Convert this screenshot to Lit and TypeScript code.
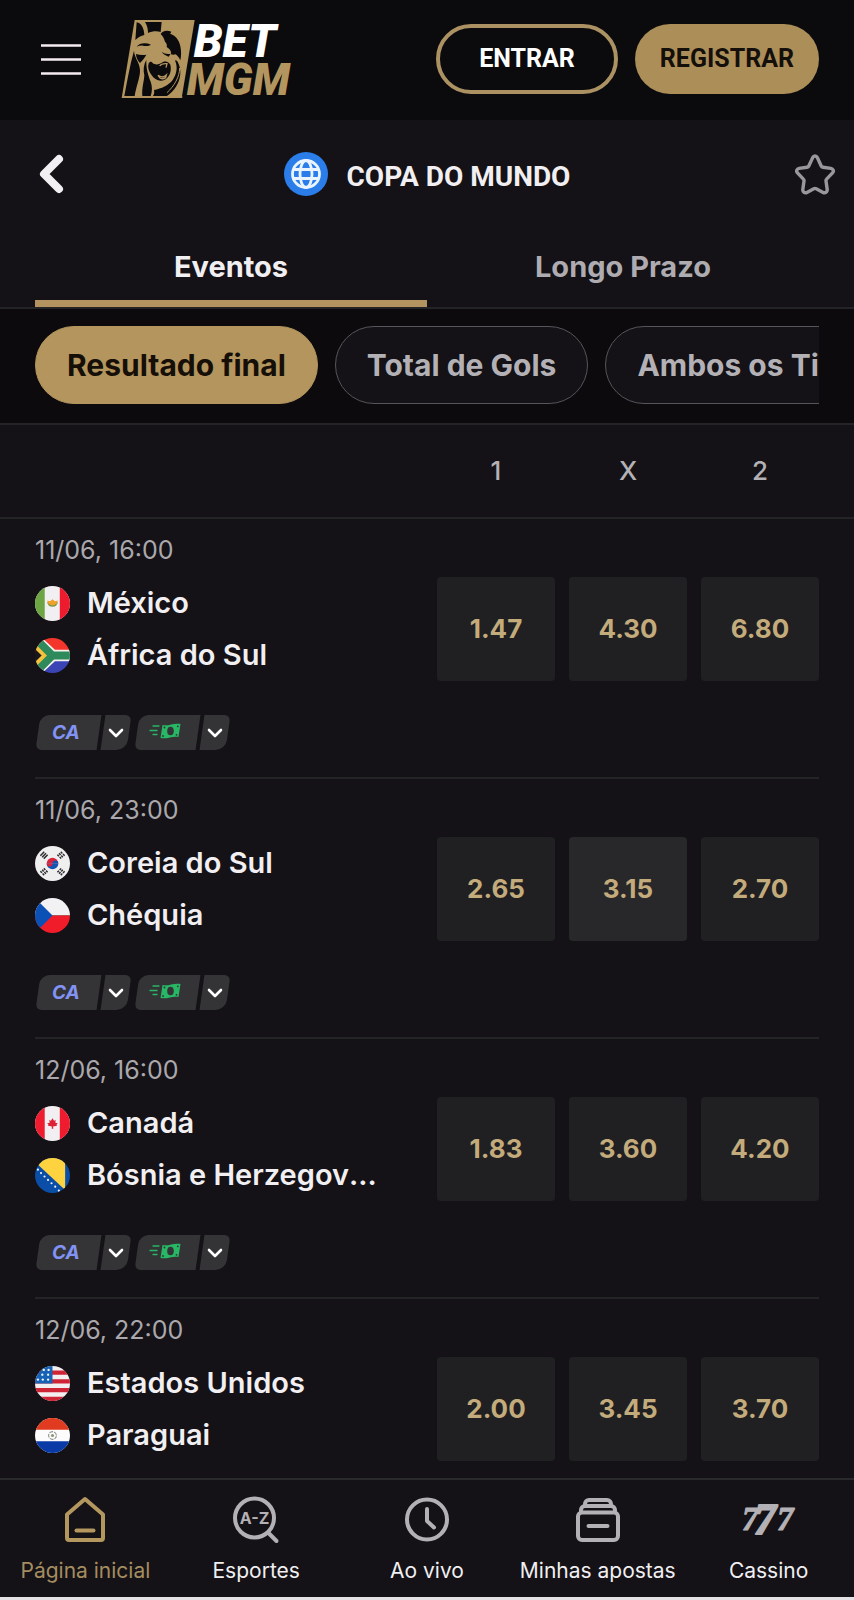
import { LitElement, html, css, svg } from "lit";
import { customElement, property, state } from "lit/decorators.js";
import { classMap } from "lit/directives/class-map.js";

interface Team {
  flag: string;
  name: string;
}
interface Match {
  time: string;
  teams: Team[];
  odds: string[];
}

const MATCHES: Match[] = [
  { time: "11/06, 16:00", teams: [{ flag: "mx", name: "México" }, { flag: "za", name: "África do Sul" }], odds: ["1.47", "4.30", "6.80"] },
  { time: "11/06, 23:00", teams: [{ flag: "kr", name: "Coreia do Sul" }, { flag: "cz", name: "Chéquia" }], odds: ["2.65", "3.15", "2.70"] },
  { time: "12/06, 16:00", teams: [{ flag: "ca", name: "Canadá" }, { flag: "ba", name: "Bósnia e Herzegovina" }], odds: ["1.83", "3.60", "4.20"] },
  { time: "12/06, 22:00", teams: [{ flag: "us", name: "Estados Unidos" }, { flag: "py", name: "Paraguai" }], odds: ["2.00", "3.45", "3.70"] },
];

const FLAGS: Record<string, unknown> = {
  mx: svg`<path fill="#f1eff1" d="M0 0h36v36H0z"/><path fill="#6da544" d="M0 0h10v36H0z"/><path fill="#ec1c2e" d="M25.500 0H36v36H25.500z"/>
    <path d="M13.500 16.500a4.600 5 0 0 0 9 0" fill="none" stroke="#7c9a3c" stroke-width="2"/>
    <path d="M12.500 15l3 .8 2.500-2.300 2.500 2.300 3-.8-1.500 3.500-4 1.500-4-1.500z" fill="#f0a12c"/>`,
  za: svg`<path fill="#f3352c" d="M0 0h36v18H0z"/><path fill="#3b44b4" d="M0 18h36v18H0z"/>
    <path d="M2 3l16 15h18M2 33l16-15" fill="none" stroke="#f5f2ee" stroke-width="12"/>
    <path d="M0 3l14 15L0 33z" fill="#17161a"/><path d="M-2 5l13 13L-2 31" fill="none" stroke="#f4c23c" stroke-width="6"/>
    <path d="M0 0l18 18h18M0 36l18-18" fill="none" stroke="#2f8a5b" stroke-width="8"/>
    <path d="M0 13l6 5-6 5z" fill="#17161a"/>`,
  kr: svg`<path fill="#f0eff0" d="M0 0h36v36H0z"/><path d="M12 18a6 6 0 0 1 12 0z" fill="#d8233b"/><path d="M12 18a6 6 0 0 0 12 0z" fill="#1455b3"/>
    <path d="M12 18a3 3 0 0 0 6 0z" fill="#d8233b"/><path d="M18 18a3 3 0 0 1 6 0z" fill="#1455b3"/>
    <g stroke="#2c2b2e" stroke-width="1.500"><path d="M5.500 10l4-4M7.300 11.500l4-4M9 13l4-4"/><path d="M23 9l4 4M24.700 7.500l4 4M26.500 6l4 4" stroke-dasharray="2.300 1"/>
    <path d="M5.500 26l4 4M7.300 24.500l4 4M9 23l4 4" stroke-dasharray="2.300 1"/><path d="M23 27l4-4M24.700 28.500l4-4M26.500 30l4-4" stroke-dasharray="2.300 1"/></g>`,
  cz: svg`<path fill="#f2f1f3" d="M0 0h36v18H0z"/><path fill="#f01c2a" d="M0 18h36v18H0z"/><path fill="#0b50b5" d="M0 0l18 18L0 36z"/>`,
  ca: svg`<path fill="#f1eff1" d="M0 0h36v36H0z"/><path fill="#ee1c2e" d="M0 0h10v36H0zM25.500 0H36v36H25.500z"/>
    <path fill="#dd2236" d="M18 12.500l1.600 2.600 1.700-.6-.4 2.700 2.600.6-1.300 1.200.4 1.300-4 .7.200 2.500h-1.600l.2-2.500-4-.7.400-1.300-1.300-1.200 2.600-.6-.4-2.700 1.700.6z"/>`,
  ba: svg`<path fill="#0b4ea8" d="M0 0h36v36H0z"/><path fill="#ffd23f" d="M2 6L6-2h25v35z"/>
    <g fill="#f3f5fa"><circle cx="3" cy="12" r="1.100"/><circle cx="6.200" cy="15.500" r="1.100"/><circle cx="9.800" cy="19" r="1.100"/><circle cx="13.400" cy="22.500" r="1.100"/><circle cx="17" cy="26" r="1.100"/><circle cx="20.800" cy="29.500" r="1.100"/><circle cx="24.500" cy="33.500" r="1.100"/></g>`,
  us: svg`<path fill="#f3eff1" d="M0 0h36v36H0z"/><path fill="#cf2336" d="M0 4.500h36v4.500H0zM0 13.500h36V18H0zM0 22.500h36V27H0zM0 31.500h36V36H0z"/>
    <path fill="#1762b5" d="M0 0h18v18H0z"/><g fill="#eef3fb"><circle cx="9" cy="4" r="1.200"/><circle cx="14" cy="4" r="1.200"/><circle cx="7.500" cy="9" r="1.200"/><circle cx="13.500" cy="9" r="1.200"/><circle cx="3" cy="14" r="1.200"/><circle cx="8" cy="14" r="1.200"/><circle cx="13.500" cy="14" r="1.200"/></g>`,
  py: svg`<path fill="#fdfcfd" d="M0 0h36v36H0z"/><path fill="#e03b20" d="M0 0h36v12H0z"/><path fill="#0a3aa6" d="M0 24h36v12H0z"/>
    <circle cx="18" cy="18" r="4" fill="none" stroke="#8c918c" stroke-width="1.100" stroke-dasharray="4 1"/><circle cx="18" cy="18" r="1.600" fill="#8a9a72"/>`,
};

@customElement("team-flag")
export class TeamFlag extends LitElement {
  @property() code = "";
  static styles = css`
    :host { display: block; flex: none; width: 35px; height: 35px; border-radius: 50%; overflow: hidden; }
    .flag { display: block; width: 100%; height: 100%; }
  `;
  render() {
    return html`<svg class="flag" viewBox="0 0 36 36" aria-hidden="true">${FLAGS[this.code]}</svg>`;
  }
}

@customElement("market-badge")
export class MarketBadge extends LitElement {
  @property() kind: "ca" | "cash" = "ca";
  static styles = css`
    :host { display: flex; gap: 4px; }
    .part { position: relative; isolation: isolate; display: flex; align-items: center; height: 35px; margin: 0; padding: 0; border: 0; background: none; font: inherit; cursor: pointer; }
    .part::before { content: ""; position: absolute; inset: 0; z-index: -1; background: #343336; transform: skewX(-8deg); }
    .main { width: 61px; padding-left: 14px; }
    .main::before { border-radius: 9px 0 0 6px; }
    .more { width: 26px; justify-content: center; }
    .more::before { border-radius: 0 6px 10px 0; }
    .ca { color: #8293f4; font-size: 19px; line-height: 24px; font-weight: 700; font-style: italic; }
    .cash { display: block; width: 32px; height: 18px; margin: 0 0 3px -2px; }
    .chevron { display: block; width: 16px; height: 10px; }
  `;
  render() {
    const cash = svg`<g fill="none" stroke="#27b765" stroke-width="1.300" stroke-linecap="round"><path d="M4 4h6M1 8.500h7M4 12.500h4"/></g>
      <path fill="#27b765" d="M13.500 3c6 1.500 11-2.500 18-1l-2 13c-6-1.500-11 2.500-18 1z"/>
      <ellipse cx="21.500" cy="9" rx="3.300" ry="4.300" fill="#343336"/><g fill="#343336"><circle cx="15.500" cy="5.500" r=".9"/><circle cx="28.800" cy="4.300" r=".9"/><circle cx="14" cy="14" r=".9"/><circle cx="27.500" cy="12.800" r=".9"/></g>`;
    return html`
      <button class="part main" aria-label=${this.kind === "ca" ? "CA" : "Cash out"}>
        ${this.kind === "ca" ? html`<span class="ca">CA</span>` : html`<svg class="cash" viewBox="0 0 32 18">${cash}</svg>`}
      </button>
      <button class="part more" aria-label="Detalhes">
        <svg class="chevron" viewBox="0 0 16 10"><path d="M2 2l6 6 6-6" fill="none" stroke="#fff" stroke-width="2.600" stroke-linecap="round" stroke-linejoin="round"/></svg>
      </button>
    `;
  }
}

@customElement("match-row")
export class MatchRow extends LitElement {
  @property({ attribute: false }) match!: Match;
  static styles = css`
    :host { display: block; padding: 13px 0 27px; border-bottom: 2px solid #242326; }
    .time { display: block; margin-bottom: 9px; color: #aaa8ac; font-size: 25px; line-height: 36px; }
    .body { display: grid; grid-template-columns: minmax(0, 1fr) minmax(0, 382px); column-gap: 56px; margin-bottom: 34px; }
    .team { display: flex; align-items: center; gap: 17px; height: 52px; }
    .name { min-width: 0; overflow: hidden; white-space: nowrap; text-overflow: ellipsis; color: #f1eff2; font-size: 29px; line-height: 40px; font-weight: 600; }
    .odds { display: grid; grid-template-columns: repeat(3, 1fr); gap: 14px; }
    .odd { padding: 0; border: 0; border-radius: 4px; background: #201f22; color: #c3ab7b; font: inherit; font-size: 26px; line-height: 32px; font-weight: 700; cursor: pointer; }
    .odd.lit { background: #28272a; }
    .badges { display: flex; gap: 8px; padding-left: 3px; }
  `;
  render() {
    const { time, teams, odds } = this.match;
    return html`
      <time class="time">${time}</time>
      <div class="body">
        <div>${teams.map((t) => html`<div class="team"><team-flag code=${t.flag}></team-flag><span class="name">${t.name}</span></div>`)}</div>
        <div class="odds">${odds.map((o) => html`<button class=${classMap({ odd: true, lit: o === "3.15" })}>${o}</button>`)}</div>
      </div>
      <div class="badges"><market-badge kind="ca"></market-badge><market-badge kind="cash"></market-badge></div>
    `;
  }
}

const NAV = [
  { label: "Página inicial", icon: svg`<path d="M6 19.500L24 4l18 15.500V43a2 2 0 0 1-2 2H8a2 2 0 0 1-2-2z"/><path d="M15.500 35.500h17"/>` },
  { label: "Esportes", icon: svg`<circle cx="22.500" cy="23" r="19.500"/><path d="M36.500 38l8 8"/><text class="az" x="22.500" y="28.500">A-Z</text>` },
  { label: "Ao vivo", icon: svg`<circle cx="24" cy="24.500" r="20"/><path d="M24 14v12l7 6.500"/>` },
  { label: "Minhas apostas", icon: svg`<rect x="4" y="17.500" width="40" height="27.500" rx="4"/><path d="M7 17v-2a4 4 0 0 1 4-4h26a4 4 0 0 1 4 4v2M11 11V9a4 4 0 0 1 4-4h18a4 4 0 0 1 4 4v2M14.500 31h19"/>` },
  { label: "Cassino", icon: svg`<text class="sevens" x="-3" y="35" font-size="33">7<tspan class="big" x="9" y="39" font-size="44">7</tspan><tspan x="32" y="35">7</tspan></text>` },
];

@customElement("app-root")
export class AppRoot extends LitElement {
  @state() private tab = 0;
  @state() private chip = 0;

  static styles = css`
    :host { display: flex; flex-direction: column; height: 100vh; box-sizing: border-box; background: #141216; color: #f1eff2; font-family: Inter, "Noto Sans", sans-serif; border-bottom: 3px solid #e4e2e4; }
    * { box-sizing: border-box; }
    button { margin: 0; padding: 0; border: 0; background: none; color: inherit; font: inherit; cursor: pointer; }
    svg { display: block; }
    .top { flex: none; display: flex; align-items: center; padding: 24px 35px 26px 36px; background: #0b0a0d; }
    .menu { padding: 6px 5px; }
    .menu-icon { width: 40px; height: 31px; }
    .logo { width: 174px; height: 82px; margin-left: 35px; margin-block: -6px; overflow: visible; }
    .auth { display: flex; align-items: center; gap: 17px; margin-left: auto; }
    .pill { height: 70px; border-radius: 36px; font-family: Roboto, "Liberation Sans", sans-serif; font-size: 25px; line-height: 32px; font-weight: 700; }
    .login { padding: 0 39px; border: 4px solid #ac9263; color: #fff; }
    .signup { padding: 0 25px; background: #ac8e58; color: #140f0a; }
    .heading { flex: none; display: grid; grid-template-columns: 1fr auto 1fr; align-items: center; height: 108px; margin-bottom: 6px; padding: 0 19px; }
    .back { justify-self: start; padding-left: 18px; }
    .back-icon { width: 28px; height: 42px; }
    .title { display: flex; align-items: center; gap: 19px; }
    .globe { width: 44px; height: 44px; }
    h1 { margin: 0; padding-top: 5px; font-family: Roboto, "Liberation Sans", sans-serif; font-size: 28px; line-height: 36px; font-weight: 700; }
    .star { justify-self: end; }
    .star-icon { width: 40px; height: 42px; }
    .tabs { flex: none; display: grid; grid-template-columns: 1fr 1fr; padding: 0 35px; border-bottom: 2px solid #242326; }
    .tab { height: 73px; border-bottom: 7px solid transparent; color: #aeacb0; font-size: 29px; line-height: 40px; font-weight: 700; }
    .tab.on { border-color: #b3935f; color: #f1eff2; }
    .chips { flex: none; padding: 17px 35px 19px; background: #0c0a0d; border-bottom: 2px solid #242326; }
    .strip { display: flex; gap: 17px; overflow: hidden; }
    .chip { flex: none; height: 78px; padding: 0 31px; border: 1px solid #56555a; border-radius: 39px; background: #141216; color: #b3b1b5; font-size: 30px; line-height: 40px; font-weight: 700; }
    .chip.on { border-color: #b3955d; background: #b3955d; color: #150f08; }
    .columns { flex: none; display: flex; justify-content: flex-end; padding: 28px 35px; border-bottom: 2px solid #242326; }
    .labels { display: grid; grid-template-columns: repeat(3, 1fr); gap: 14px; width: 382px; color: #b3b1b5; font-size: 26px; line-height: 36px; font-weight: 500; text-align: center; }
    .list { flex: 1; min-height: 0; overflow: hidden; padding: 0 35px; }
    .nav { flex: none; display: grid; grid-template-columns: repeat(5, 1fr); padding: 15px 0 10px; border-top: 2px solid #29282b; background: #141216; }
    .link { display: flex; flex-direction: column; align-items: center; gap: 12px; color: #f1eff2; font-size: 21px; line-height: 32px; text-decoration: none; white-space: nowrap; }
    .link.on { color: #a58d60; }
    .nav-icon { width: 48px; height: 48px; overflow: visible; fill: none; stroke: #b3b1b5; stroke-width: 4px; stroke-linecap: round; stroke-linejoin: round; }
    .link.on .nav-icon { stroke: #b3975f; }
    .az { fill: #b3b1b5; stroke: none; font-size: 16px; font-weight: 700; text-anchor: middle; }
    .sevens { fill: #b3b1b5; stroke: #b3b1b5; stroke-width: 1px; font-family: "Liberation Serif", serif; font-weight: 700; font-style: italic; }
    .big { stroke-width: 2px; }
    .word { font-family: Roboto, "Liberation Sans", sans-serif; font-weight: 900; font-style: italic; }
    .bet { fill: #fff; font-size: 138px; }
    .mgm { fill: #b3955f; font-size: 131px; }
  `;

  private logo() {
    return html`<svg class="logo" viewBox="364 54 522 246" role="img" aria-label="BetMGM">
      <path fill="#b3955f" d="M405 60H585L546 294H366z"/>
      <g fill="#0b0a0d" transform="translate(354 48)">
        <path d="M57 19c14 3 22 16 23 38-10 2-19 7-27 15z"/>
        <path d="M82 18h50l-3 30c-13-4-26-2-38 3 0-13-3-23-9-33z"/>
        <path d="M57 92c8-11 27-13 43-6-5 4-15 5-24 3-7-1-13 1-19 3z"/>
        <path d="M55 114c10 3 20 4 31 2-5 10-12 17-19 25-7-8-12-16-12-27z"/>
        <path d="M49 104c1 22 18 36 18 60 0 22-11 44-16 76H20c8-42 16-90 29-136z"/>
        <path d="M86 132c-8 14-10 30-6 46-1 20-8 38-6 62h25c5-14 5-30 0-43-7-18-14-38-13-65z"/>
        <path d="M93 142c3-6 8-7 12-1 8 7 20 5 31-3 10-4 18 1 22 8 5 20-3 38-18 46-14 6-30-2-38-14-9-12-13-24-9-36z"/>
        <path d="M129 54c4-9 18-13 32-7-2 3-2 5-4 6 16 4 28 20 31 38 3 14 3 28 0 42-5-10-9-15-14-18-5 2-9 2-14 0 2-9-4-17-13-22 2-6 0-11-5-16-3-10-7-17-13-23z"/>
        <path d="M132 108c9 5 16 7 27 5l-6 9c-9-3-16-7-21-14z"/>
        <path d="M173 136c8 20 3 40-8 56-12 16-34 26-56 30 2 7 0 13-3 18h42c22-14 38-40 40-66 1-14-3-28-9-38-4-5-8-4-6 0z"/>
      </g>
      <g fill="none" stroke="#b3955f" transform="translate(354 48)">
        <path d="M126 150c4-6 12-8 22-7l-3 12M121 178c8 6 18 6 25-1l-2 8c-6 4-12 4-17 1z" stroke-width="4"/>
        <path d="M186 156c0 26-16 54-38 74M84 60l14-10" stroke-width="3"/>
        <path d="M14 243h180" stroke-width="5"/>
      </g>
      <text class="word bet" x="582" y="170">BET</text>
      <text class="word mgm" x="561" y="286">MGM</text>
    </svg>`;
  }

  render() {
    const tabs = ["Eventos", "Longo Prazo"];
    const chips = ["Resultado final", "Total de Gols", "Ambos os Times Marcam"];
    return html`
      <header class="top">
        <button class="menu" aria-label="Menu">
          <svg class="menu-icon" viewBox="0 0 40 31"><path d="M0 1.500h40M0 15.500h40M0 29.500h40" stroke="#f5ecef" stroke-width="2.600"/></svg>
        </button>
        ${this.logo()}
        <div class="auth">
          <button class="pill login">ENTRAR</button>
          <button class="pill signup">REGISTRAR</button>
        </div>
      </header>
      <div class="heading">
        <button class="back" aria-label="Voltar">
          <svg class="back-icon" viewBox="0 0 28 42"><path d="M22 6L7 21l15 15" fill="none" stroke="#f1eff2" stroke-width="8" stroke-linecap="round" stroke-linejoin="round"/></svg>
        </button>
        <div class="title">
          <svg class="globe" viewBox="0 0 44 44" aria-hidden="true"><circle cx="22" cy="22" r="22" fill="#2b7de9"/>
            <g fill="none" stroke="#e9f4ff" stroke-width="2.800"><circle cx="22" cy="22" r="13.500"/><ellipse cx="22" cy="22" rx="6" ry="13.500"/><path d="M10 17.500h24M10 26.500h24"/></g></svg>
          <h1>COPA DO MUNDO</h1>
        </div>
        <button class="star" aria-label="Favoritar">
          <svg class="star-icon" viewBox="1 0 40 42"><path d="M18.700 4.600c1-2.100 3.600-2.100 4.600 0l3.900 8.400c.3.700.9 1.100 1.700 1.200l8 1.200c2.300.3 3.200 2.900 1.600 4.500l-5.900 6.200c-.5.500-.7 1.200-.6 1.900l1.200 8.600c.3 2.300-2.100 3.900-4.100 2.800l-6.900-3.700c-.8-.4-1.600-.4-2.400 0l-6.900 3.700c-2 1.100-4.400-.5-4.100-2.800l1.200-8.600c.1-.7-.1-1.400-.6-1.900l-5.900-6.200c-1.600-1.600-.7-4.200 1.600-4.500l8-1.200c.8-.1 1.400-.5 1.700-1.200z" fill="none" stroke="#99979b" stroke-width="3.400"/></svg>
        </button>
      </div>
      <div class="tabs" role="tablist">
        ${tabs.map((t, i) => html`<button role="tab" aria-selected=${i === this.tab} class=${classMap({ tab: true, on: i === this.tab })} @click=${() => (this.tab = i)}>${t}</button>`)}
      </div>
      <div class="chips"><div class="strip">
        ${chips.map((c, i) => html`<button class=${classMap({ chip: true, on: i === this.chip })} @click=${() => (this.chip = i)}>${c}</button>`)}
      </div></div>
      <div class="columns"><div class="labels"><span>1</span><span>X</span><span>2</span></div></div>
      <main class="list">${MATCHES.map((m) => html`<match-row .match=${m}></match-row>`)}</main>
      <nav class="nav">
        ${NAV.map((n, i) => html`<a href="#" class=${classMap({ link: true, on: i === 0 })}><svg class="nav-icon" viewBox="0 0 48 48" aria-hidden="true">${n.icon}</svg><span>${n.label}</span></a>`)}
      </nav>
    `;
  }
}
